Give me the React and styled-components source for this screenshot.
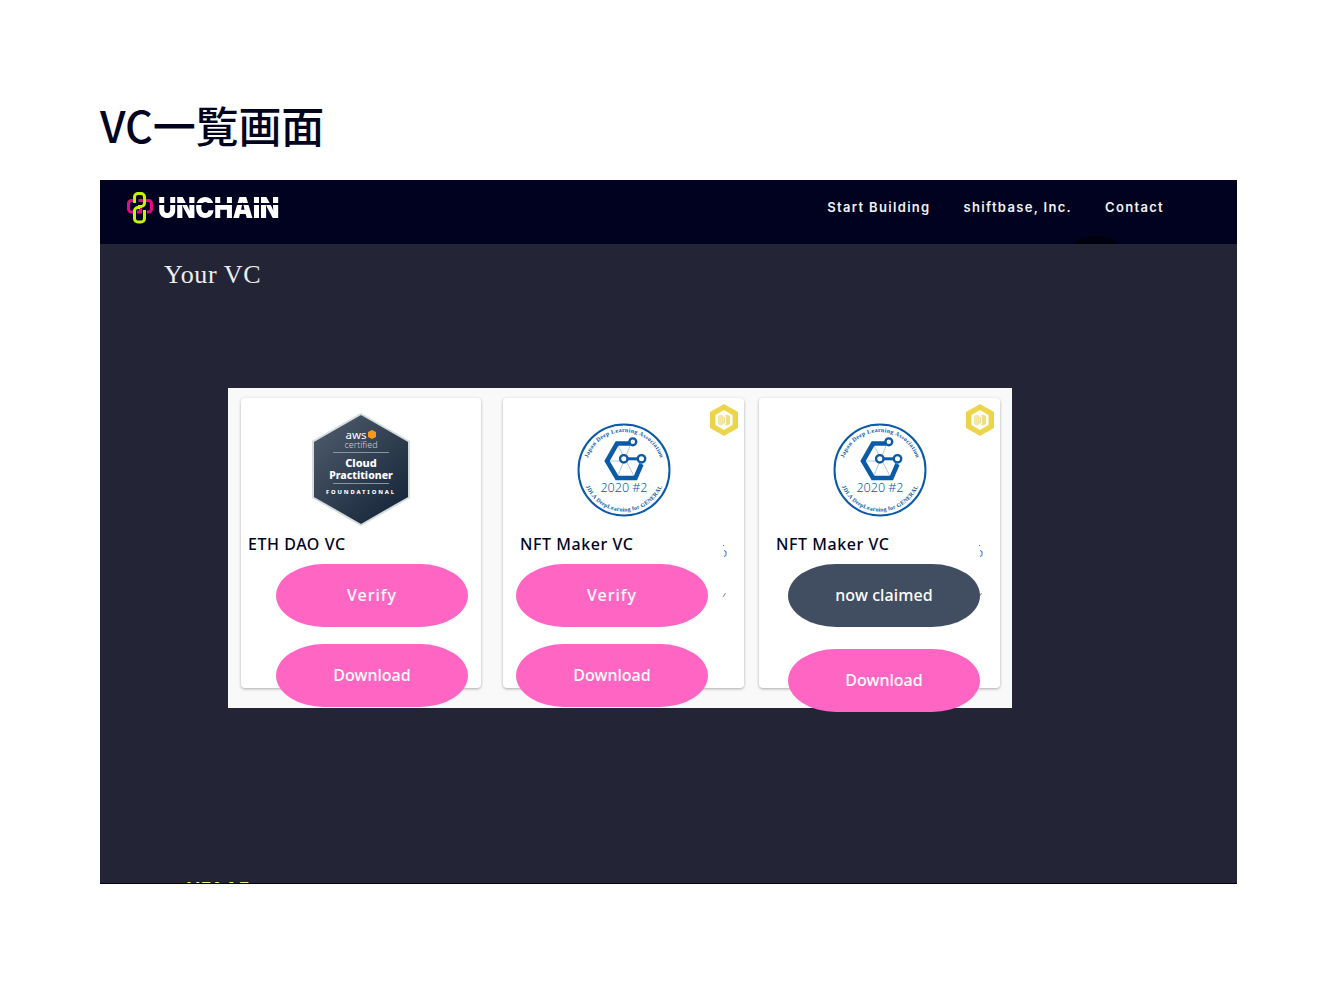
import React from 'react';
import styled, { createGlobalStyle } from 'styled-components';

const Global = createGlobalStyle`
  *, *::before, *::after { box-sizing: border-box; }
  html, body { margin: 0; padding: 0; background: #fff; }
  body { font-family: "Noto Sans", "Noto Sans CJK JP", sans-serif; }
`;

const Page = styled.main`
  width: 1338px;
  height: 984px;
  padding: 0 101px 0 100px;
  overflow: hidden;
`;

const Title = styled.h1`
  margin: 0;
  height: 180px;
  padding-top: 94px;
  font: 500 43px/60px "Noto Sans CJK JP", "Noto Sans", sans-serif;
  letter-spacing: -0.1px;
  color: #01031f;
`;

const Frame = styled.section`
  position: relative;
  height: 704px;
  background: #232537;
  border-bottom: 1px solid #000220;
  overflow: hidden;
  display: flex;
  flex-direction: column;
`;

const NavBar = styled.header`
  position: relative;
  flex: 0 0 64px;
  background: #000220;
  display: flex;
  align-items: flex-start;
  justify-content: space-between;
  padding: 11px 73px 0 27px;
`;

const NavBump = styled.span`
  position: absolute;
  left: 975px;
  bottom: 0;
  width: 42px;
  height: 8px;
  background: #00000f;
  border-radius: 50% 50% 0 0 / 100% 100% 0 0;
`;

const Brand = styled.div`
  display: flex;
  align-items: center;
  gap: 5px;
`;

const BrandName = styled.span`
  display: block;
  width: 142px;
  font: 900 29px/32px Inter, "Liberation Sans", sans-serif;
  letter-spacing: -0.4px;
  white-space: nowrap;
  color: transparent;
  background: linear-gradient(180deg, #fff 0 11.5px, #000220 11.5px 13px, #fff 13px 100%);
  -webkit-background-clip: text;
  background-clip: text;
  transform: scaleX(0.88);
  transform-origin: left center;
  margin-top: 1px;
`;

const NavLinks = styled.nav`
  display: flex;
  gap: 33px;
  padding-top: 7px;
`;

const NavLink = styled.a`
  font: 600 13px/18px Inter, "Liberation Sans", sans-serif;
  letter-spacing: 1.32px;
  color: #f2f2f4;
`;

const Content = styled.div`
  position: relative;
  flex: 1;
  padding: 14px 0 0 64px;
`;

const PageHeading = styled.h2`
  margin: 0;
  font: 400 26px/34px "Liberation Serif", serif;
  letter-spacing: 0.6px;
  color: #eceded;
`;

const Gallery = styled.div`
  width: 784px;
  height: 320px;
  margin: 96px 0 0 64px;
  padding: 10px 0 0 13px;
  background: #f9f9f9;
  display: flex;
  align-items: flex-start;
`;

const CardBox = styled.article`
  position: relative;
  flex: none;
  width: ${(p) => p.$width}px;
  margin-left: ${(p) => p.$before}px;
  height: 290px;
  padding-top: 15px;
  background: #fff;
  border-radius: 4px;
  box-shadow: 0 1px 3px rgba(0, 0, 0, 0.32);
  display: flex;
  flex-direction: column;
`;

const BadgeSlot = styled.div`
  flex: none;
  height: 113px;
  display: flex;
  align-items: center;
  justify-content: center;
`;

const CardName = styled.h3`
  flex: none;
  margin: 6px 0 0 ${(p) => p.$inset}px;
  height: 24px;
  font: 500 16px/24px "Noto Sans", sans-serif;
  letter-spacing: 0.55px;
  color: #01031f;
`;

const Pill = styled.button`
  position: relative;
  flex: none;
  width: 192px;
  height: 63px;
  margin-left: ${(p) => p.$x}px;
  margin-top: ${(p) => p.$gap}px;
  border: 0;
  padding: 0 0 2px;
  border-radius: 48px / 31.5px;
  background: ${(p) => (p.$claimed ? '#414e62' : '#ff66c4')};
  color: #fff;
  font: 500 16px/24px "Noto Sans", sans-serif;
  letter-spacing: ${(p) => p.$track}px;
`;

const Corner = styled.span`
  position: absolute;
  top: 6px;
  right: 6px;
  display: flex;
`;

const Scrap = styled.span`
  position: absolute;
  left: 219px;
  top: ${(p) => p.$top}px;
  display: flex;
`;

const FootWord = styled.div`
  position: absolute;
  left: 87px;
  bottom: -15px;
  font: 700 17px/18px Inter, "Liberation Sans", sans-serif;
  letter-spacing: 1.3px;
  color: #eef27a;
`;

function ChainMark() {
  return (
    <svg width="26" height="32" viewBox="0 0 26 32" fill="none" strokeWidth="3">
      <path d="M7.500 8.500H4.500a3 3 0 0 0-3 3V17a3 3 0 0 0 3 3H7.500" stroke="#ea0a7c" />
      <path d="M10 20h3.500V14" stroke="#ea0a7c" />
      <path d="M11.500 8.500h10a3 3 0 0 1 3 3V17a3 3 0 0 1-3 3H20" stroke="#ea0a7c" />
      <path d="M7.500 11V5a3.500 3.500 0 0 1 3.500-3.500h3a3.500 3.500 0 0 1 3.500 3.500V11a3.500 3.500 0 0 1-3.500 3.500H11" stroke="#c6f403" />
      <path d="M17.500 18v8.500a3.500 3.500 0 0 1-3.500 3.500h-3a3.500 3.500 0 0 1-3.500-3.500V19a3.500 3.500 0 0 1 3.500-3.500h2" stroke="#c6f403" />
    </svg>
  );
}

function AwsBadge() {
  return (
    <svg width="98" height="113" viewBox="0 0 98 113">
      <defs>
        <linearGradient id="awsFill" x1="0.15" y1="0.1" x2="0.85" y2="0.9">
          <stop offset="0" stopColor="#4a5768" />
          <stop offset="1" stopColor="#18273b" />
        </linearGradient>
      </defs>
      <polygon points="49,1 97,28.500 97,84.500 49,112 1,84.500 1,28.500" fill="url(#awsFill)" stroke="#d5dcdc" strokeWidth="2" />
      <g fontFamily="'Noto Sans', sans-serif" textAnchor="middle" fill="#fff">
        <text x="44" y="26" fontSize="11.500" fontWeight="400">aws</text>
        <polygon points="60,17 64,19 64,24 60,26 56,24 56,19" fill="#f7981d" />
        <text x="49" y="35" fontSize="9" fontWeight="300" fill="#cfd3d8">certified</text>
        <rect x="21" y="39" width="56" height="1" fill="#8a94a0" />
        <text x="49" y="54" fontSize="11" fontWeight="800">Cloud</text>
        <text x="49" y="65.500" fontSize="10.500" fontWeight="800">Practitioner</text>
        <rect x="21" y="70" width="56" height="1" fill="#8a94a0" />
        <text x="49" y="81" fontSize="5.800" fontWeight="800" letterSpacing="1.900">FOUNDATIONAL</text>
      </g>
    </svg>
  );
}

function DlaBadge({ uid }) {
  const blue = '#0a5aa8';
  return (
    <svg width="94" height="94" viewBox="0 0 94 94">
      <defs>
        <path id={`top${uid}`} d="M9 47a38 38 0 0 1 76 0" />
        <path id={`bot${uid}`} d="M5.500 47a41.500 41.500 0 0 0 83 0" />
      </defs>
      <circle cx="47" cy="47" r="45.500" fill="#fff" stroke={blue} strokeWidth="2" />
      <text fontFamily="'Liberation Serif', serif" fontSize="6" fontWeight="700" fill={blue} letterSpacing="0.300">
        <textPath href={`#top${uid}`} startOffset="50%" textAnchor="middle">Japan Deep Learning Association</textPath>
      </text>
      <text fontFamily="'Liberation Serif', serif" fontSize="5.800" fontWeight="700" fill={blue} letterSpacing="0.200">
        <textPath href={`#bot${uid}`} startOffset="50%" textAnchor="middle">JDLA DeepLearning for GENERAL</textPath>
      </text>
      <path d="M40 20.500L58 55M54 20.500L40 55M30 38h16" stroke="#8fb0d4" strokeWidth="0.700" fill="none" />
      <path d="M53 20.500H40L30 38l10 17h18.500L64.500 41" fill="none" stroke={blue} strokeWidth="4.600" />
      <path d="M47 35.800h17" stroke={blue} strokeWidth="3" />
      <circle cx="55.800" cy="18.800" r="3.400" fill="#fff" stroke={blue} strokeWidth="2.400" />
      <circle cx="46.800" cy="35.800" r="3.700" fill="#fff" stroke={blue} strokeWidth="2.400" />
      <circle cx="64.500" cy="35.800" r="3.700" fill="#fff" stroke={blue} strokeWidth="2.400" />
      <text x="47" y="69" textAnchor="middle" fontFamily="'Noto Sans', sans-serif" fontSize="12.500" fontWeight="300" fill={blue}>2020 #2</text>
    </svg>
  );
}

function GoldMark() {
  return (
    <svg width="28" height="32" viewBox="0 0 28 32">
      <polygon points="14,0 28,8 28,24 14,32 0,24 0,8" fill="#ecd54a" />
      <polygon points="14,6 22.500,11 22.500,21 14,26 5.500,21 5.500,11" fill="#fff" />
      <polygon points="11,10.500 14,12.200 14,20 11,21.500 8,20 8,12.200" fill="#f3e7a6" />
      <polygon points="17,10.500 20,12.200 20,20 17,21.500 14,20 14,12.200" fill="#eedd84" />
      <path d="M13 11.500l2.500 1.500v6.500L13 21" fill="none" stroke="#fff" strokeWidth="1.200" />
    </svg>
  );
}

function ScrapBlue() {
  return (
    <svg width="5" height="14" viewBox="0 0 5 14">
      <path d="M1 1l1 1M2 6.500l2 1v4l-2 1" fill="none" stroke="#2a73c9" strokeWidth="1" />
    </svg>
  );
}

function ScrapTick() {
  return (
    <svg width="5" height="6" viewBox="0 0 5 6">
      <path d="M1 5l2.500-4" fill="none" stroke="#777" strokeWidth="0.900" />
    </svg>
  );
}

const cards = [
  { name: 'ETH DAO VC', width: 240, before: 0, inset: 7, x: 35, badge: 'aws', label: 'Verify', gap: 17 },
  { name: 'NFT Maker VC', width: 241, before: 22, inset: 17, x: 13, badge: 'dla', label: 'Verify', gap: 17, corner: true },
  { name: 'NFT Maker VC', width: 241, before: 15, inset: 17, x: 29, badge: 'dla', label: 'now claimed', gap: 22, corner: true, claimed: true },
];

function Card({ card, index }) {
  return (
    <CardBox $width={card.width} $before={card.before}>
      <BadgeSlot>{card.badge === 'aws' ? <AwsBadge /> : <DlaBadge uid={index} />}</BadgeSlot>
      <CardName $inset={card.inset}>{card.name}</CardName>
      {card.corner && (
        <>
          <Corner><GoldMark /></Corner>
          <Scrap $top={146}><ScrapBlue /></Scrap>
          <Scrap $top={194}><ScrapTick /></Scrap>
        </>
      )}
      <Pill $x={card.x} $gap={8} $claimed={card.claimed} $track={card.claimed ? 0.1 : 1}>{card.label}</Pill>
      <Pill $x={card.x} $gap={card.gap} $track={0}>Download</Pill>
    </CardBox>
  );
}

export default function App() {
  return (
    <Page>
      <Global />
      <Title>VC一覧画面</Title>
      <Frame>
        <NavBar>
          <Brand>
            <ChainMark />
            <BrandName>UNCHAIN</BrandName>
          </Brand>
          <NavLinks>
            <NavLink>Start Building</NavLink>
            <NavLink>shiftbase, Inc.</NavLink>
            <NavLink>Contact</NavLink>
          </NavLinks>
          <NavBump />
        </NavBar>
        <Content>
          <PageHeading>Your VC</PageHeading>
          <Gallery>
            {cards.map((card, i) => <Card key={i} card={card} index={i} />)}
          </Gallery>
          <FootWord>VFAAF</FootWord>
        </Content>
      </Frame>
    </Page>
  );
}
